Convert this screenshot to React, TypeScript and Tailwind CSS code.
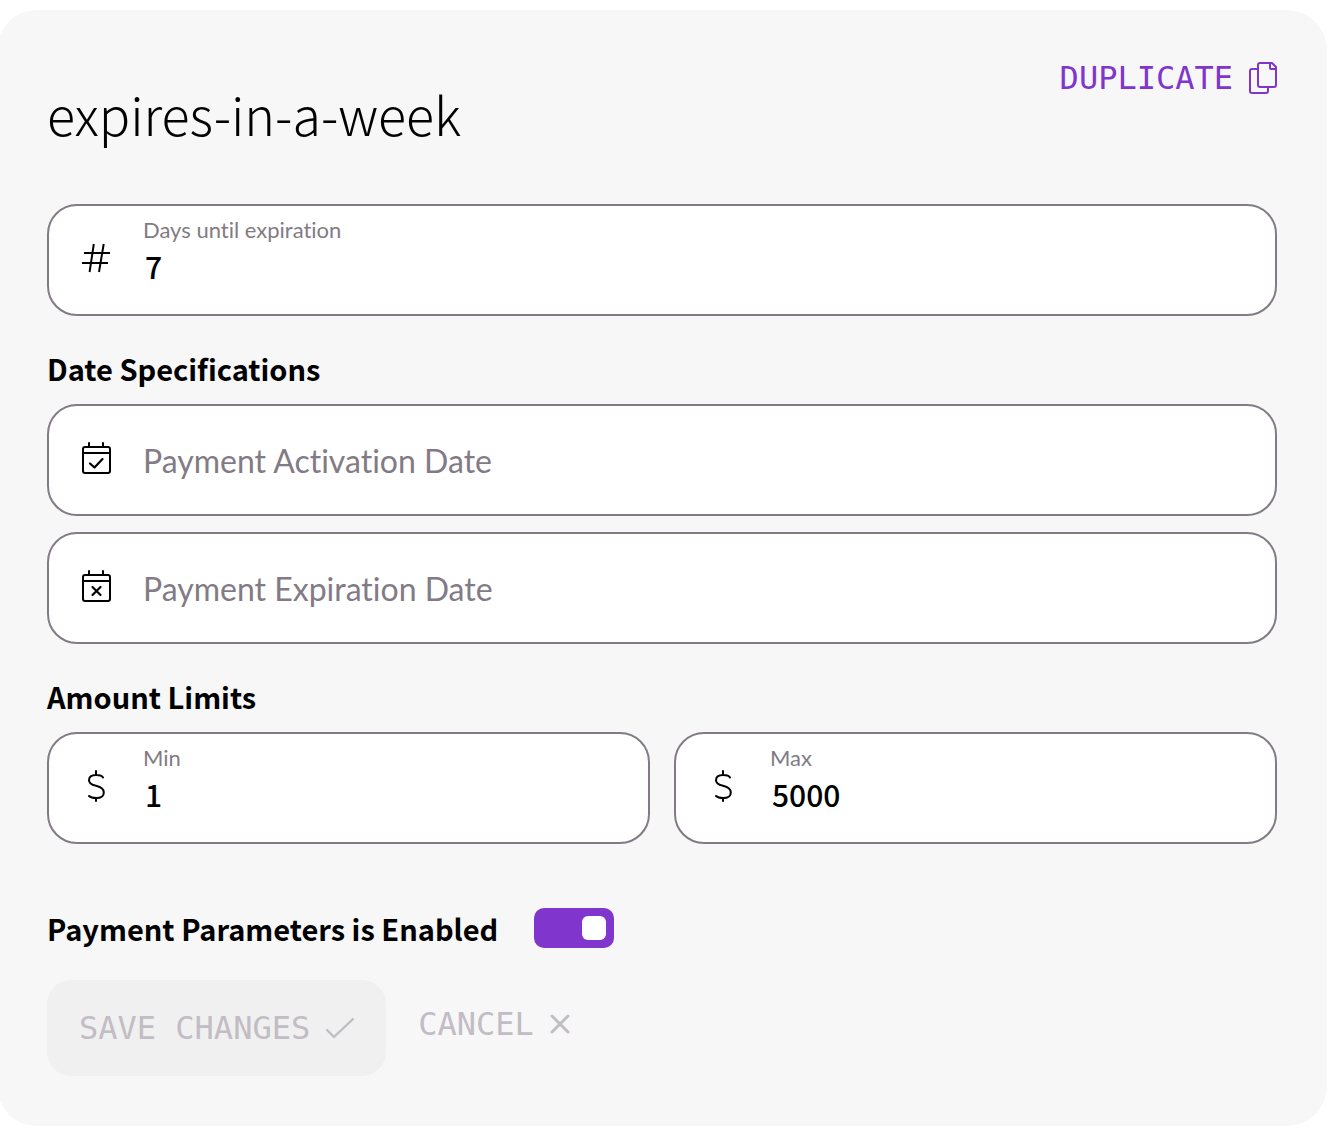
import React, { useState } from 'react';

type IconProps = {
  className?: string;
};

type FieldProps = {
  id: string;
  label: string;
  icon: React.ReactNode;
  value: string;
  onChange: (value: string) => void;
};

const stroke = {
  fill: 'none',
  stroke: 'currentColor',
  strokeWidth: 2,
  strokeLinecap: 'round' as const,
  strokeLinejoin: 'round' as const,
  'aria-hidden': true,
};

const HashIcon = ({ className }: IconProps) => (
  <svg viewBox="0 0 30 32" className={className} {...stroke} strokeLinecap="butt">
    <path d="M12.8 2L8.6 30M22.7 2L18 30M3 11h26M1 21h26" />
  </svg>
);

const CalendarIcon = ({ mark, className }: IconProps & { mark: 'check' | 'cross' }) => (
  <svg viewBox="0 0 30 32" className={className} {...stroke}>
    <rect x="2" y="5" width="27" height="26" rx="2" />
    <path d="M2 11h27M8 1v4M22 1v4" />
    {mark === 'check' ? (
      <path d="M9 21.5l4.5 4 8-8.5" strokeWidth={2.2} />
    ) : (
      <path d="M11.5 17l8 8M19.5 17l-8 8" strokeWidth={2.2} />
    )}
  </svg>
);

const DollarIcon = ({ className }: IconProps) => (
  <svg viewBox="0 0 30 32" className={className} {...stroke}>
    <path d="M15 1v4M15 28v3M22 7.5C21 5.7 18.5 5 15.2 5C10.5 5 8 6.8 8 10.2C8 13.6 10.8 14.8 15 15.8C20 17 22.8 18.7 22.8 22.4C22.8 26 19.8 28 15.2 28C12 28 9.5 27.4 8 26" />
  </svg>
);

const CopyIcon = ({ className }: IconProps) => (
  <svg viewBox="0 0 28 32" className={className} {...stroke}>
    <path d="M11 1h12l4 4v18a2 2 0 0 1-2 2H11a2 2 0 0 1-2-2V3a2 2 0 0 1 2-2z" />
    <path d="M21 1v5a1 1 0 0 0 1 1h5" />
    <path d="M9 7H3a2 2 0 0 0-2 2v20a2 2 0 0 0 2 2h14a2 2 0 0 0 2-2v-4" />
  </svg>
);

const CheckIcon = ({ className }: IconProps) => (
  <svg viewBox="0 0 28 20" className={className} {...stroke} strokeWidth={2.4}>
    <path d="M1 12l7 7L27 1" />
  </svg>
);

const CrossIcon = ({ className }: IconProps) => (
  <svg viewBox="0 0 20 20" className={className} {...stroke} strokeWidth={3}>
    <path d="M2 2l16 16M18 2L2 18" />
  </svg>
);

const boxStyle = 'flex h-28 rounded-[30px] border-2 border-[#827b85] bg-white pl-8 pr-6 gap-8';

// Field with a small label above its value
const ValueField = ({ id, label, icon, value, onChange }: FieldProps) => (
  <div className={boxStyle}>
    {icon}
    <div className="flex min-w-0 flex-1 flex-col pt-[10px]">
      <label htmlFor={id} className="text-[22px] leading-7 text-[#827b85]">
        {label}
      </label>
      <input
        id={id}
        type="text"
        inputMode="numeric"
        value={value}
        onChange={(e) => onChange(e.target.value)}
        className="h-11 w-full bg-transparent pl-[2px] font-['Noto_Sans_CJK_JP',sans-serif] text-[30px] font-medium text-black outline-none"
      />
    </div>
  </div>
);

// Empty field, the placeholder is its label
const DateField = ({ id, label, icon, value, onChange }: FieldProps) => (
  <div className={boxStyle}>
    {icon}
    <input
      id={id}
      type="text"
      aria-label={label}
      placeholder={label}
      value={value}
      onChange={(e) => onChange(e.target.value)}
      className="h-full min-w-0 flex-1 bg-transparent text-[32px] text-black outline-none placeholder:text-[#827b85]"
    />
  </div>
);

function App() {
  const [days, setDays] = useState<string>('7');
  const [activation, setActivation] = useState<string>('');
  const [expiration, setExpiration] = useState<string>('');
  const [min, setMin] = useState<string>('1');
  const [max, setMax] = useState<string>('5000');
  const [enabled, setEnabled] = useState<boolean>(true);

  const iconStyle = 'mt-9 h-8 w-[30px] shrink-0 text-black';
  const headingStyle =
    "mt-8 mb-4 font-['Noto_Sans_CJK_JP',sans-serif] text-[29px] leading-10 font-bold text-black";

  return (
    <div className="overflow-hidden bg-white pt-[10px] pb-4 font-['Lato',sans-serif] [font-variant-ligatures:none]">
      <form
        onSubmit={(e) => e.preventDefault()}
        className="-ml-[3px] mr-[13px] rounded-[40px] bg-[#f7f7f7] px-[50px] pt-[52px] pb-[50px]"
      >
        <header className="mb-[58px] flex items-start justify-between">
          <h1 className="mt-5 font-['Noto_Sans_CJK_JP',sans-serif] text-[52px] leading-16 font-light text-black">
            expires-in-a-week
          </h1>
          <button
            type="button"
            className="flex h-8 items-center gap-4 font-['DejaVu_Sans_Mono',monospace] text-[32px] text-[#8035cd]"
          >
            DUPLICATE
            <CopyIcon className="h-8 w-7" />
          </button>
        </header>

        <ValueField
          id="days"
          label="Days until expiration"
          icon={<HashIcon className={iconStyle} />}
          value={days}
          onChange={setDays}
        />

        <h2 className={headingStyle}>Date Specifications</h2>
        <div className="flex flex-col gap-4">
          <DateField
            id="activation"
            label="Payment Activation Date"
            icon={<CalendarIcon mark="check" className={iconStyle} />}
            value={activation}
            onChange={setActivation}
          />
          <DateField
            id="expiration"
            label="Payment Expiration Date"
            icon={<CalendarIcon mark="cross" className={iconStyle} />}
            value={expiration}
            onChange={setExpiration}
          />
        </div>

        <h2 className={headingStyle}>Amount Limits</h2>
        <div className="grid grid-cols-2 gap-6">
          <ValueField
            id="min"
            label="Min"
            icon={<DollarIcon className={iconStyle} />}
            value={min}
            onChange={setMin}
          />
          <ValueField
            id="max"
            label="Max"
            icon={<DollarIcon className={iconStyle} />}
            value={max}
            onChange={setMax}
          />
        </div>

        <div className="mt-16 flex items-center gap-9">
          <label
            htmlFor="enabled"
            className="font-['Noto_Sans_CJK_JP',sans-serif] text-[29px] leading-10 font-bold text-black"
          >
            Payment Parameters is Enabled
          </label>
          <input
            id="enabled"
            type="checkbox"
            role="switch"
            checked={enabled}
            onChange={(e) => setEnabled(e.target.checked)}
            className="flex h-10 w-20 shrink-0 appearance-none items-center rounded-[10px] bg-[#c2bcc4] px-2 before:size-6 before:rounded-md before:bg-white checked:justify-end checked:bg-[#8035cd]"
          />
        </div>

        <div className="mt-8 flex items-start gap-8 font-['DejaVu_Sans_Mono',monospace] text-[32px] text-[#c2bcc4]">
          <button
            type="submit"
            disabled
            className="flex h-24 items-center gap-4 rounded-3xl bg-[#f0f0f0] px-8"
          >
            SAVE CHANGES
            <CheckIcon className="h-5 w-7" />
          </button>
          <button type="button" disabled className="flex h-[88px] items-center gap-4">
            CANCEL
            <CrossIcon className="size-5" />
          </button>
        </div>
      </form>
    </div>
  );
}

export default App;
